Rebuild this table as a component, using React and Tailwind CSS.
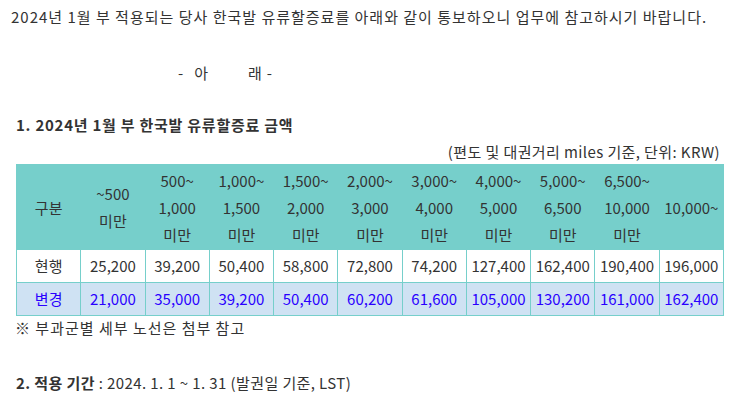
import React from 'react';

const headers = [
  ['구분'],
  ['~500', '미만'],
  ['500~', '1,000', '미만'],
  ['1,000~', '1,500', '미만'],
  ['1,500~', '2,000', '미만'],
  ['2,000~', '3,000', '미만'],
  ['3,000~', '4,000', '미만'],
  ['4,000~', '5,000', '미만'],
  ['5,000~', '6,500', '미만'],
  ['6,500~', '10,000', '미만'],
  ['10,000~'],
];

const current = ['현행', '25,200', '39,200', '50,400', '58,800', '72,800', '74,200', '127,400', '162,400', '190,400', '196,000'];
const changed = ['변경', '21,000', '35,000', '39,200', '50,400', '60,200', '61,600', '105,000', '130,200', '161,000', '162,400'];

export default function App() {
  return (
    <div
      className="w-[745px] h-[412px] bg-white text-[#333] text-[15px] overflow-hidden"
      style={{ fontFamily: '"Noto Sans CJK KR", "Noto Sans", sans-serif' }}
    >
      {/* intro */}
      <p className="pl-[11px] pt-[5px] leading-[24px] tracking-[1px] whitespace-nowrap">
        2024년 1월 부 적용되는 당사 한국발 유류할증료를 아래와 같이 통보하오니 업무에 참고하시기 바랍니다.
      </p>

      <p className="pl-[178px] mt-[32px] leading-[24px] flex">
        <span>-</span>
        <span className="ml-[11px]">아</span>
        <span className="ml-[40px]">래</span>
        <span className="ml-[5px]">-</span>
      </p>

      {/* section 1 */}
      <h2 className="pl-[16px] mt-[28px] font-bold leading-[24px] tracking-[0.75px]">
        1. 2024년 1월 부 한국발 유류할증료 금액
      </h2>

      <div className="w-[723px] mt-[3px] text-right leading-[24px] pr-[3px] tracking-[0.4px]">
        (편도 및 대권거리 miles 기준, 단위: KRW)
      </div>

      <table className="ml-[16px] w-[708px] table-fixed border-collapse text-center">
        <thead>
          <tr className="h-[85px] bg-[#76cfcb]">
            {headers.map((h, i) => (
              <th
                key={i}
                className="font-normal leading-[27px] border border-[#76cfcb] border-l-white first:border-l-[#76cfcb] px-0"
              >
                {h.map((line, j) => (
                  <div key={j}>{line}</div>
                ))}
              </th>
            ))}
          </tr>
        </thead>
        <tbody>
          <tr className="h-[33px] bg-white">
            {current.map((v, i) => (
              <td key={i} className="border border-[#76cfcb] leading-[20px] px-0">{v}</td>
            ))}
          </tr>
          <tr className="h-[33px] bg-[#cfe2f3] text-[#2a00ff]">
            {changed.map((v, i) => (
              <td key={i} className="border border-[#76cfcb] leading-[20px] px-0">{v}</td>
            ))}
          </tr>
        </tbody>
      </table>

      <p className="pl-[15px] leading-[24px] tracking-[1px]">※ 부과군별 세부 노선은 첨부 참고</p>

      {/* section 2 */}
      <p className="pl-[16px] mt-[31px] leading-[24px] tracking-[0.4px]">
        <span className="font-bold">2. 적용 기간</span> : 2024. 1. 1 ~ 1. 31 (발권일 기준, LST)
      </p>
    </div>
  );
}
